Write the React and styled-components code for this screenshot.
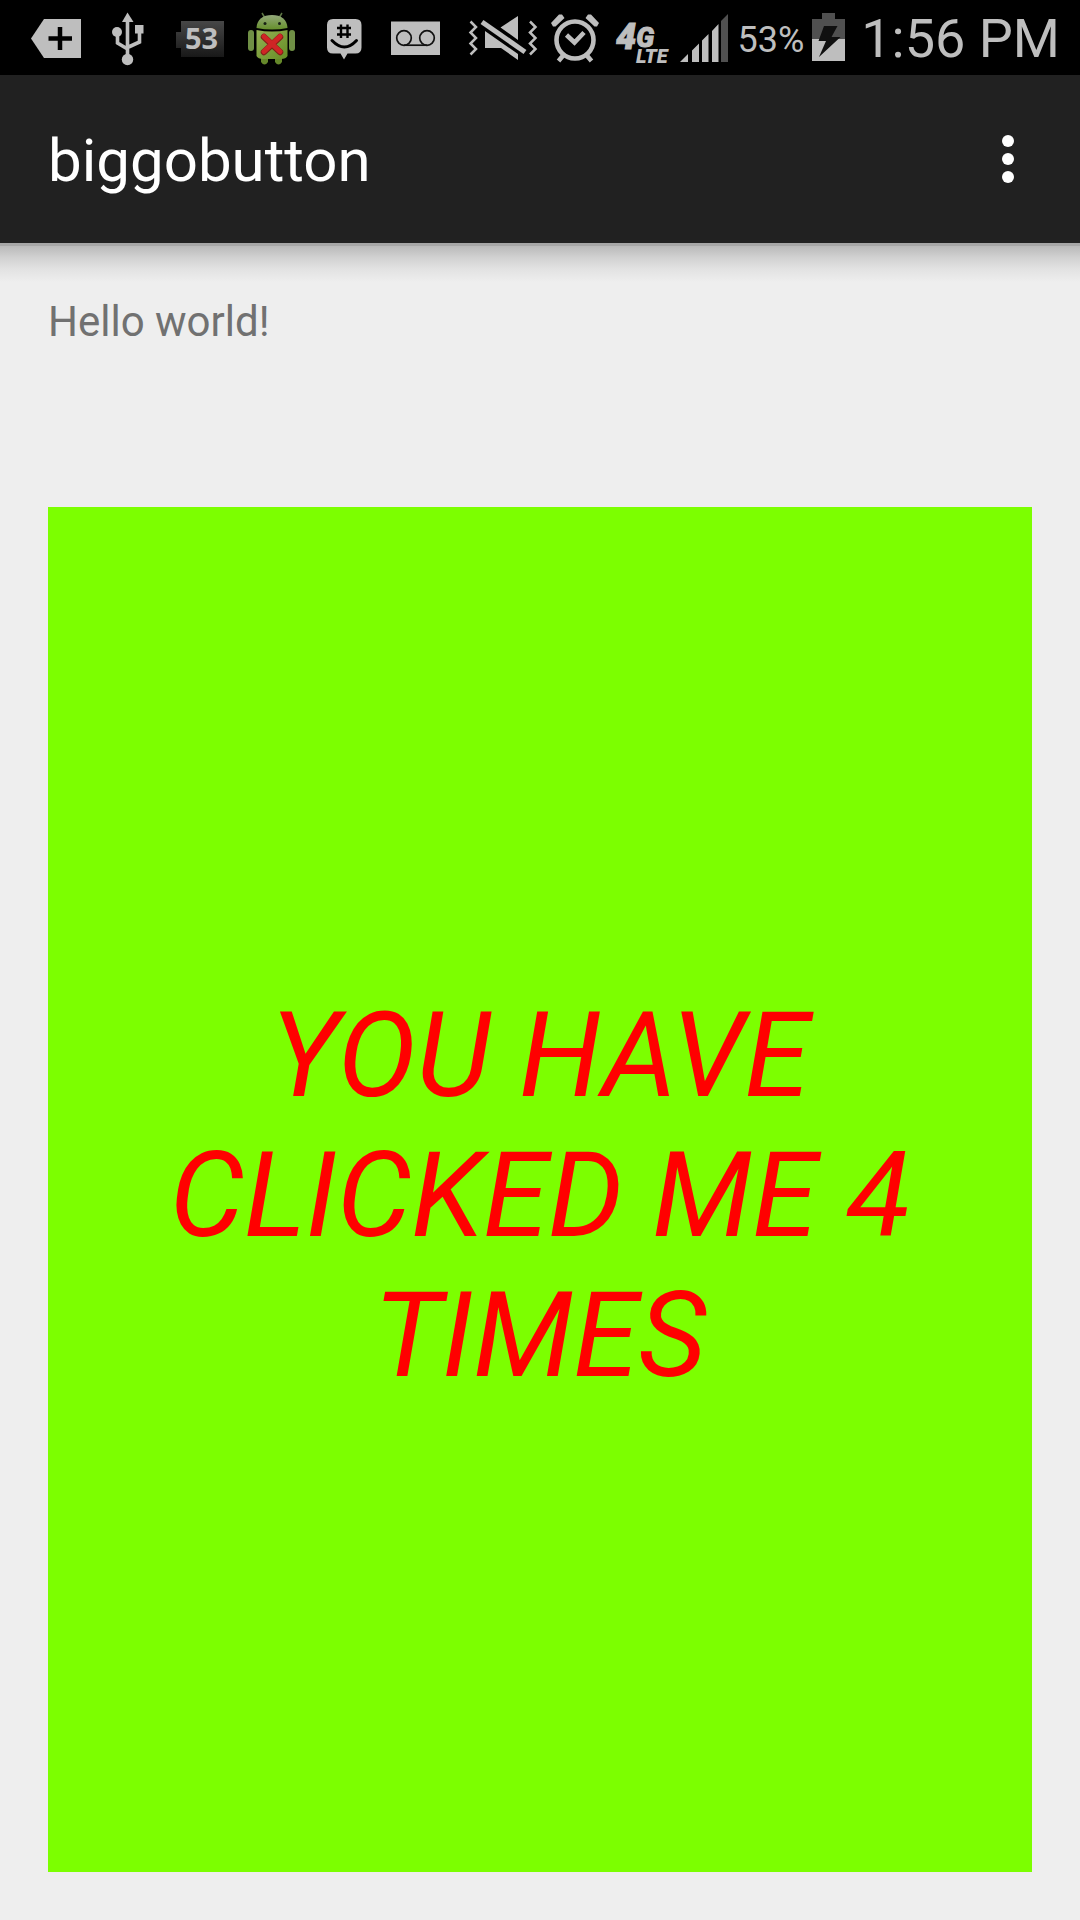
import React, { useState } from 'react';
import styled, { createGlobalStyle } from 'styled-components';

const GlobalStyle = createGlobalStyle`
  *, *::before, *::after { box-sizing: border-box; }
  body {
    margin: 0;
    background: #eeeeee;
    font-family: Roboto, "Liberation Sans", sans-serif;
  }
`;

const Screen = styled.div`
  display: flex;
  flex-direction: column;
  min-height: 100vh;
`;

const StatusBar = styled.div`
  display: flex;
  justify-content: space-between;
  height: 75px;
  padding: 0 20px;
  background: #000000;
  color: #bebebe;
`;

const IconGroup = styled.div`
  display: flex;
  align-items: center;
`;

const StatusIcon = styled.svg`
  display: block;
  flex: none;
  width: ${(p) => p.$width}px;
  height: 75px;
  fill: #bebebe;
`;

const BatteryPercent = styled.span`
  padding: 4px 8px 0 2px;
  font-size: 36px;
  line-height: 44px;
`;

const Clock = styled.time`
  padding: 2px 0 0 16px;
  font-size: 54px;
  line-height: 64px;
`;

const AppBar = styled.header`
  display: flex;
  align-items: center;
  justify-content: space-between;
  height: 168px;
  padding: 0 36px 0 48px;
  background: #212121;
  color: #ffffff;
`;

const Title = styled.h1`
  margin: 0;
  padding-top: 4px;
  font-size: 60px;
  font-weight: 400;
  line-height: 72px;
`;

const OverflowButton = styled.button`
  display: flex;
  flex-direction: column;
  align-items: center;
  justify-content: center;
  gap: 6px;
  width: 72px;
  height: 96px;
  padding: 0;
  border: 0;
  background: none;
`;

const Dot = styled.span`
  width: 12px;
  height: 12px;
  border-radius: 50%;
  background: #ffffff;
`;

const Content = styled.main`
  display: flex;
  flex: 1;
  flex-direction: column;
  gap: 154px;
  padding: 48px;
  background: linear-gradient(
      #a6a6a6 0,
      #a6a6a6 3px,
      #b9b9b9 3px,
      #d0d0d0 14px,
      #e2e2e2 26px,
      #eeeeee 39px
    ) top / 100% 39px no-repeat #eeeeee;
`;

const Greeting = styled.p`
  margin: 0;
  color: #717171;
  font-size: 42px;
  line-height: 62px;
`;

const BigButton = styled.button`
  flex: 1;
  padding: 12px 48px 0;
  border: 0;
  border-radius: 0;
  background: #7cff00;
  color: #ff0000;
  font-family: inherit;
  font-size: 118px;
  font-style: italic;
  line-height: 140px;
  text-align: center;
  text-transform: uppercase;
`;

function AddTagIcon() {
  return (
    <StatusIcon $width={72} viewBox="20 0 72 75" aria-label="New item">
      <path d="M31 38.500 44 19H81V58H44Z" />
      <path d="M60 27V50M48.500 38.500H72" stroke="#000" strokeWidth="4.500" />
    </StatusIcon>
  );
}

function UsbIcon() {
  return (
    <StatusIcon $width={72} viewBox="92 0 72 75" aria-label="USB connected">
      <path d="M127.500 12.500 133.500 22H122Z" />
      <circle cx="117" cy="32" r="5" />
      <rect x="135" y="25" width="8.500" height="8.500" />
      <circle cx="127.500" cy="59.500" r="5.700" />
      <path
        d="M127.500 20V58M117.500 34V43L127.500 49M139.500 32V42L127.500 47.500"
        fill="none"
        stroke="#bebebe"
        strokeWidth="3.600"
      />
    </StatusIcon>
  );
}

function BatteryLevelIcon() {
  return (
    <StatusIcon $width={72} viewBox="164 0 72 75" aria-label="Battery 53">
      <defs>
        <linearGradient id="cell" x1="0" y1="0" x2="0" y2="1">
          <stop offset="0" stopColor="#474747" />
          <stop offset="1" stopColor="#181818" />
        </linearGradient>
      </defs>
      <path d="M181 21H224V57H181V48H176V32H181Z" fill="url(#cell)" />
      <text
        x="201.500"
        y="49"
        textAnchor="middle"
        fontFamily="'Open Sans', 'Noto Sans', sans-serif"
        fontSize="29"
        fontWeight="700"
      >
        53
      </text>
    </StatusIcon>
  );
}

function DroidErrorIcon() {
  return (
    <StatusIcon $width={72} viewBox="236 0 72 75" aria-label="App error">
      <defs>
        <linearGradient id="droid" x1="0" y1="0" x2="1" y2="1">
          <stop offset="0" stopColor="#94b254" />
          <stop offset="1" stopColor="#668d25" />
        </linearGradient>
        <linearGradient id="head" x1="0" y1="0" x2="0" y2="1">
          <stop offset="0" stopColor="#93a87b" />
          <stop offset="1" stopColor="#66902b" />
        </linearGradient>
      </defs>
      <path d="M262 13 265 18M282 13 279 18" stroke="#5d7644" strokeWidth="1.500" />
      <path d="M256.500 28C257 19 263 15 272 15S287 19 287.500 28Q272 31 256.500 28Z" fill="url(#head)" />
      <circle cx="265" cy="23.500" r="1.500" fill="#182014" />
      <circle cx="279.500" cy="23.500" r="1.500" fill="#182014" />
      <rect x="248" y="30" width="6" height="21" rx="3" fill="#6f8f45" />
      <rect x="289" y="30" width="6" height="21" rx="3" fill="#6f8f45" />
      <path d="M261 56H268V62Q264.500 67 261 62ZM275 56H282V62Q278.500 67 275 62Z" fill="#65882a" />
      <path d="M256.500 30Q272 33 287.500 30V56Q286 59 281 59H263Q258 59 256.500 56Z" fill="url(#droid)" />
      <path d="M264 37 280 52M280 37 264 52" stroke="#812018" strokeWidth="6.500" strokeLinecap="round" />
      <path d="M264 36.500 280 51.500M280 36.500 264 51.500" stroke="#cf2525" strokeWidth="5" strokeLinecap="round" />
    </StatusIcon>
  );
}

function ChatFaceIcon() {
  return (
    <StatusIcon $width={72} viewBox="308 0 72 75" aria-label="Group message">
      <path d="M333 19H355.500Q361.500 19 361.500 25V47.500Q361.500 53.500 355.500 53.500H347.500L344 59.500 340.500 53.500H333Q327 53.500 327 47.500V25Q327 19 333 19Z" />
      <path
        d="M341 24.500V38M347.500 24.500V38M337 28H351M337 34.500H351"
        stroke="#000"
        strokeWidth="2.400"
      />
      <path
        d="M332 40.500Q344.500 53.500 356.500 40.500"
        fill="none"
        stroke="#000"
        strokeWidth="3"
        strokeLinecap="round"
      />
    </StatusIcon>
  );
}

function VoicemailIcon() {
  return (
    <StatusIcon $width={72} viewBox="380 0 72 75" aria-label="Voicemail">
      <rect x="391" y="21.500" width="49" height="33.500" />
      <g fill="none" stroke="#111" strokeWidth="1.700">
        <circle cx="404" cy="38" r="7.300" />
        <circle cx="427" cy="38" r="7.300" />
        <path d="M404 45.200H427" />
      </g>
    </StatusIcon>
  );
}

function MuteVibrateIcon() {
  return (
    <StatusIcon $width={72} viewBox="467 0 72 75" aria-label="Vibrate">
      <path d="M518 16V40L500.500 27.500ZM485 31 518 54V60L501 48H485Z" />
      <path d="M482 22 525 52" stroke="#bebebe" strokeWidth="5" />
      <path
        d="M470.500 21.500 476 27 470.500 32.500 476 38 470.500 43.500 476 49 470.500 54.500M530 21.500 535.500 27 530 32.500 535.500 38 530 43.500 535.500 49 530 54.500"
        fill="none"
        stroke="#bebebe"
        strokeWidth="2.500"
      />
    </StatusIcon>
  );
}

function AlarmIcon() {
  return (
    <StatusIcon $width={72} viewBox="539 0 72 75" aria-label="Alarm set">
      <circle cx="575" cy="40" r="18.500" fill="none" stroke="#bebebe" strokeWidth="4.600" />
      <path d="M551 23 559 14.500H562L564.500 18 555.500 26.500H553ZM599 23 591 14.500H588L585.500 18 594.500 26.500H597Z" />
      <path
        d="M566.500 35 574.500 42.500 584 32.500M564 54.500 558.500 61M586 54.500 591.500 61"
        fill="none"
        stroke="#bebebe"
        strokeWidth="4.600"
      />
    </StatusIcon>
  );
}

function NetworkIcon() {
  return (
    <StatusIcon $width={64} viewBox="611 0 64 75" aria-label="4G LTE">
      <g
        fontFamily="Roboto, sans-serif"
        fontStyle="italic"
        fontWeight="900"
        stroke="#bebebe"
        strokeWidth="1"
      >
        <text x="616" y="49" fontSize="36">
          4<tspan fontSize="27" dy="-2">G</tspan>
        </text>
        <text x="636" y="63" fontSize="20" strokeWidth="0">LTE</text>
      </g>
    </StatusIcon>
  );
}

function SignalIcon() {
  return (
    <StatusIcon $width={60} viewBox="675 0 60 75" aria-label="Signal strength">
      <path d="M680 62 688 54V62ZM692 50.500 699 43.500V62H692ZM702 40.500 708.500 34V62H702ZM712 31 718.500 24V62H712Z" />
      <path d="M721 21 728 14V62H721Z" fill="#505050" />
    </StatusIcon>
  );
}

function ChargingIcon() {
  return (
    <StatusIcon $width={33} viewBox="812 0 33 75" aria-label="Charging">
      <path d="M822 13H835V19H845V39H812V19H822Z" fill="#505050" />
      <rect x="812" y="39" width="33" height="22" />
      <path d="M824 26H837.500L831.500 37H840.500L819 57 826 41H818.500Z" fill="#101010" />
    </StatusIcon>
  );
}

export default function App() {
  const [clicks, setClicks] = useState(4);

  return (
    <>
      <GlobalStyle />
      <Screen>
        <StatusBar>
          <IconGroup>
            <AddTagIcon />
            <UsbIcon />
            <BatteryLevelIcon />
            <DroidErrorIcon />
            <ChatFaceIcon />
            <VoicemailIcon />
          </IconGroup>
          <IconGroup>
            <MuteVibrateIcon />
            <AlarmIcon />
            <NetworkIcon />
            <SignalIcon />
            <BatteryPercent>53%</BatteryPercent>
            <ChargingIcon />
            <Clock dateTime="13:56">1:56 PM</Clock>
          </IconGroup>
        </StatusBar>
        <AppBar>
          <Title>biggobutton</Title>
          <OverflowButton type="button" aria-label="More options">
            <Dot />
            <Dot />
            <Dot />
          </OverflowButton>
        </AppBar>
        <Content>
          <Greeting>Hello world!</Greeting>
          <BigButton type="button" onClick={() => setClicks(clicks + 1)}>
            You have clicked me {clicks} times
          </BigButton>
        </Content>
      </Screen>
    </>
  );
}
